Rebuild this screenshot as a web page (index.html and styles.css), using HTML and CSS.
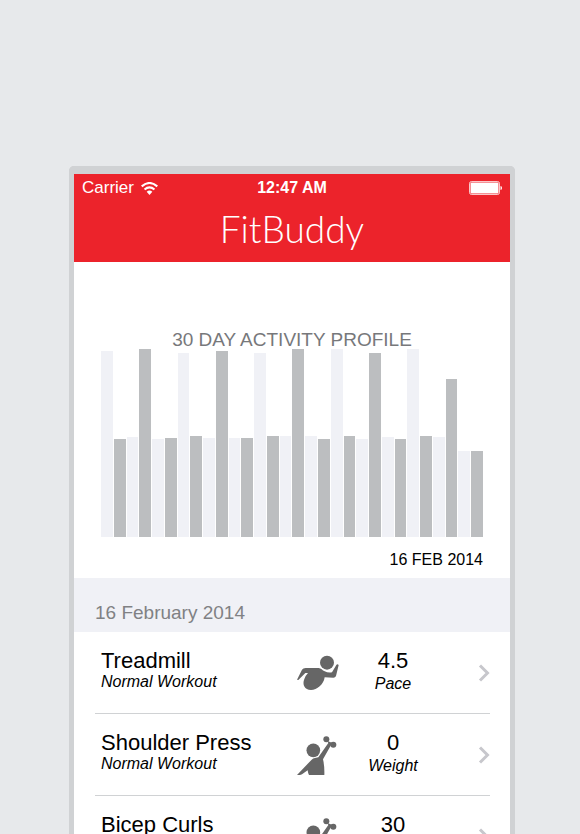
FILE: index.html
```html
<!DOCTYPE html>
<html lang="en">
<head>
<meta charset="utf-8">
<meta name="viewport" content="width=device-width, initial-scale=1">
<title>FitBuddy</title>
<link rel="stylesheet" href="styles.css">
</head>
<body>
<svg class="symbols" aria-hidden="true">
  <symbol id="runner" viewBox="51 33 126 129">
    <circle cx="141" cy="68" r="21"/>
    <path d="M51 119 L66 89 Q69 84 77 84 L116 84 C123 84 127 91 134 94 Q144 99 156 97 L169 75 Q172 70 176 75 L168 108 Q166 113 160 113 L134 112 C131 134 111 150 93 150 C74 150 66 134 73 117 Q77 106 84 99 L76 99 L55 120 Z"/>
  </symbol>
  <symbol id="lifter" viewBox="51 25 126 129">
    <circle cx="100" cy="77" r="20.5"/>
    <circle cx="139" cy="44" r="9"/>
    <circle cx="160" cy="60" r="9"/>
    <path d="M141 48 L159 56 L152 63 L129 104 Q134 125 133 151 L87 151 Q84 147 83 137 L66 149 Q63 151 59 151 L51 151 L95 105 Q99 100 105 100 L115 98 L145 55 Z"/>
  </symbol>
  <symbol id="chevron" viewBox="0 0 12 18">
    <path d="M2 1.5 L9.5 9 L2 16.5" fill="none" stroke="currentColor" stroke-width="3"/>
  </symbol>
</svg>
<main class="stage">
  <div class="phone">
    <header class="top">
      <div class="status">
        <span class="carrier">Carrier
          <svg class="wifi" viewBox="0 0 48 36" aria-hidden="true">
            <path d="M2 12 Q24 -7 46 12 M10 21 Q24 9 38 21" fill="none" stroke="currentColor" stroke-width="6"/>
            <path d="M16 27 Q24 20 32 27 L24 36 Z" fill="currentColor"/>
          </svg>
        </span>
        <span class="clock">12:47 AM</span>
        <svg class="battery" viewBox="0 0 33 14" aria-hidden="true">
          <rect x="0.5" y="0.5" width="30" height="13" rx="2" fill="none" stroke="currentColor" opacity=".75"/>
          <rect x="1.5" y="1.5" width="28" height="11" rx="1" fill="currentColor"/>
          <path d="M31.5 5 Q33 5 33 7 Q33 9 31.5 9 Z" fill="currentColor"/>
        </svg>
      </div>
      <h1 class="brand">FitBuddy</h1>
    </header>

    <section class="profile">
      <h2 class="profile-title">30 DAY ACTIVITY PROFILE</h2>
      <div class="bars">
        <i style="height:186px"></i><i style="height:98px"></i><i style="height:100px"></i><i style="height:188px"></i><i style="height:98px"></i>
        <i style="height:99px"></i><i style="height:184px"></i><i style="height:101px"></i><i style="height:99px"></i><i style="height:186px"></i>
        <i style="height:99px"></i><i style="height:99px"></i><i style="height:184px"></i><i style="height:101px"></i><i style="height:101px"></i>
        <i style="height:188px"></i><i style="height:101px"></i><i style="height:98px"></i><i style="height:188px"></i><i style="height:101px"></i>
        <i style="height:98px"></i><i style="height:184px"></i><i style="height:100px"></i><i style="height:98px"></i><i style="height:188px"></i>
        <i style="height:101px"></i><i style="height:100px"></i><i style="height:158px"></i><i style="height:86px"></i><i style="height:86px"></i>
      </div>
      <p class="profile-date">16 FEB 2014</p>
    </section>

    <h2 class="day">16 February 2014</h2>
    <ul class="workouts">
      <li>
        <a class="row" href="#treadmill">
          <span class="cell"><span class="main">Treadmill</span><span class="sub">Normal Workout</span></span>
          <svg class="figure" aria-hidden="true"><use href="#runner"/></svg>
          <span class="cell value"><span class="main">4.5</span><span class="sub">Pace</span></span>
          <svg class="chevron" aria-hidden="true"><use href="#chevron"/></svg>
        </a>
      </li>
      <li>
        <a class="row" href="#shoulder-press">
          <span class="cell"><span class="main">Shoulder Press</span><span class="sub">Normal Workout</span></span>
          <svg class="figure" aria-hidden="true"><use href="#lifter"/></svg>
          <span class="cell value"><span class="main">0</span><span class="sub">Weight</span></span>
          <svg class="chevron" aria-hidden="true"><use href="#chevron"/></svg>
        </a>
      </li>
      <li>
        <a class="row" href="#bicep-curls">
          <span class="cell"><span class="main">Bicep Curls</span></span>
          <svg class="figure" aria-hidden="true"><use href="#lifter"/></svg>
          <span class="cell value"><span class="main">30</span></span>
          <svg class="chevron" aria-hidden="true"><use href="#chevron"/></svg>
        </a>
      </li>
    </ul>
  </div>
</main>
</body>
</html>
```
FILE: styles.css
```css
* {
  box-sizing: border-box;
}

body,
h1,
h2,
p,
ul {
  margin: 0;
  padding: 0;
}

body {
  background: #e7e9eb;
  color: #000;
  font-family: "Liberation Sans", Arial, sans-serif;
}

.symbols {
  display: none;
}

.stage {
  display: flex;
  height: 100vh;
  padding: 166px 65px 0 69px;
  overflow: hidden;
}

.phone {
  flex: 1;
  min-width: 0;
  overflow: hidden;
  background: #fff;
  border: solid #d0d2d4;
  border-width: 8px 5px 0;
  border-radius: 5px 5px 0 0;
}

.top {
  height: 88px;
  background: #ec232b;
  color: #fff;
}

.status {
  display: grid;
  grid-template-columns: 1fr auto 1fr;
  align-items: center;
  height: 28px;
  padding: 0 8px;
}

.carrier {
  display: flex;
  align-items: center;
  gap: 7px;
  font-size: 17px;
}

.wifi {
  width: 17px;
  height: 13px;
}

.clock {
  font-size: 16px;
  font-weight: 700;
  line-height: 20px;
}

.battery {
  width: 33px;
  height: 14px;
  justify-self: end;
}

.brand {
  font-family: Lato, "Liberation Sans", sans-serif;
  font-size: 37px;
  font-weight: 300;
  line-height: 54px;
  text-align: center;
}

.profile {
  height: 316px;
  padding: 68px 27px 0;
}

.profile-title {
  color: #77787b;
  font-size: 19px;
  font-weight: 400;
  line-height: 20px;
  text-align: center;
}

.bars {
  display: flex;
  align-items: flex-end;
  gap: 1px;
  height: 187px;
}

.bars i {
  flex: 1;
  background: #f0f1f6;
}

.bars i:nth-child(even) {
  background: #bcbec0;
}

.profile-date {
  padding-top: 12px;
  font-size: 16px;
  line-height: 22px;
  text-align: right;
}

.day {
  height: 54px;
  padding: 24px 21px 0;
  background: #f0f1f6;
  color: #808184;
  font-size: 19px;
  font-weight: 400;
  line-height: 22px;
}

.workouts {
  padding: 0 20px 0 21px;
  list-style: none;
}

.row {
  display: grid;
  grid-template-columns: 1fr 42px 108px 43px;
  align-items: center;
  height: 82px;
  padding-left: 6px;
  border-bottom: 1px solid #d0d2d4;
  color: inherit;
  text-decoration: none;
}

.cell {
  align-self: start;
  padding-top: 17px;
}

.main,
.sub {
  display: block;
}

.main {
  font-size: 22px;
  line-height: 24px;
}

.sub {
  font-size: 16px;
  font-style: italic;
  line-height: 18px;
}

.value {
  text-align: center;
}

.value .sub {
  line-height: 22px;
}

.figure {
  width: 42px;
  height: 43px;
  fill: #666;
}

.chevron {
  width: 12px;
  height: 18px;
  justify-self: end;
  color: #c7c7cc;
}
```
